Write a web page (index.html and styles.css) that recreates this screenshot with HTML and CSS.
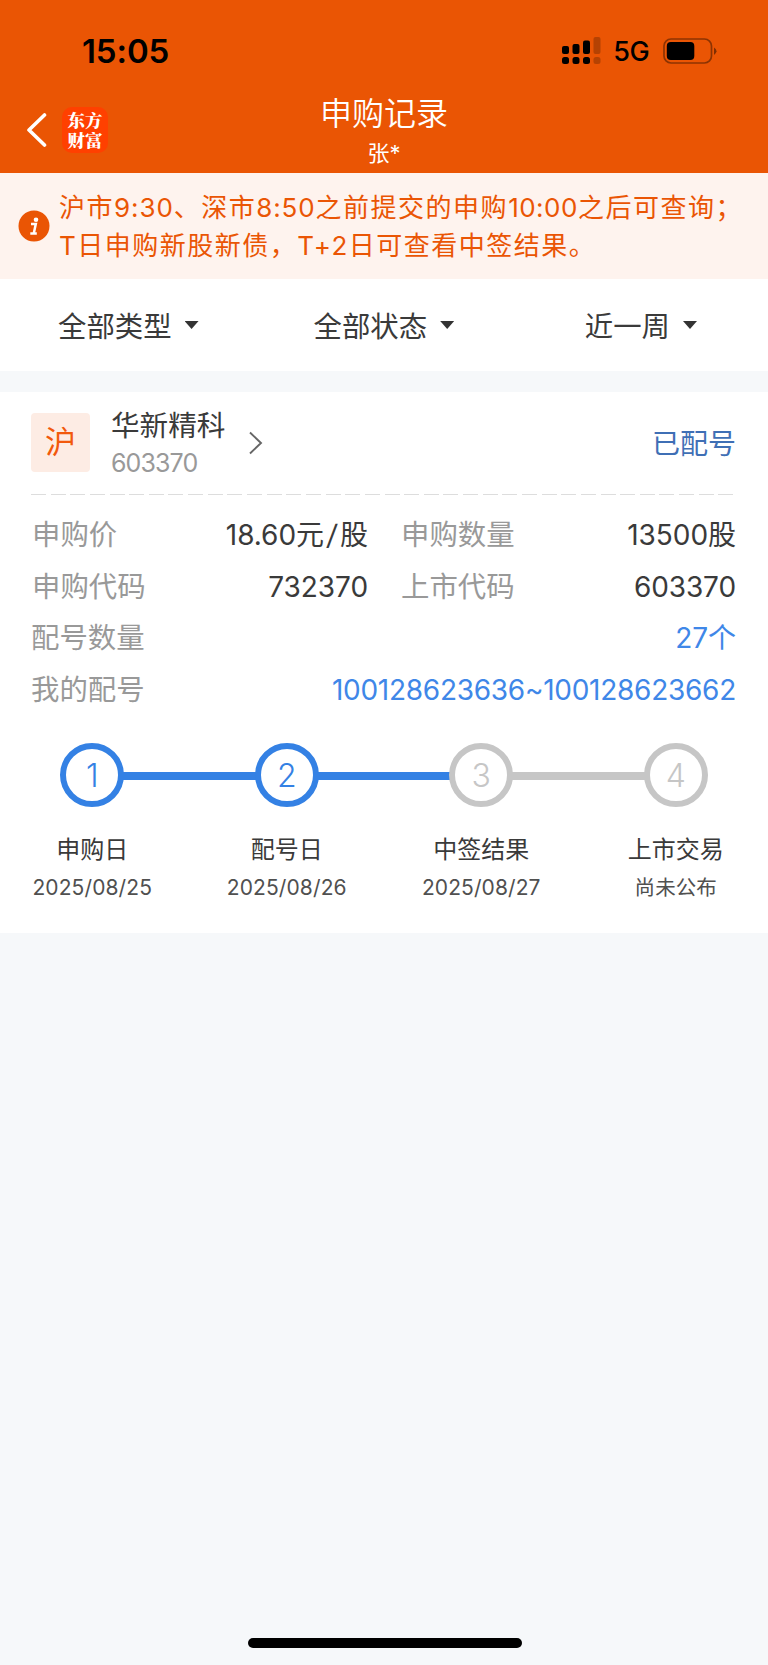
FILE: index.html
```html
<!DOCTYPE html>
<html lang="zh-CN">
<head>
<meta charset="utf-8">
<title>申购记录</title>
<link rel="stylesheet" href="styles.css">
</head>
<body>
<div class="screen">
  <header class="header">
    <div class="status">
      <span class="time">15:05</span>
      <div class="status-icons">
        <svg class="signal" width="40" height="28" viewBox="0 0 40 28">
          <rect x="1" y="9" width="7" height="8" rx="2"/><rect x="11.5" y="7" width="7" height="10" rx="2"/><rect x="22" y="3.500" width="7" height="13.500" rx="2"/>
          <rect x="1" y="20" width="7" height="7" rx="2.500"/><rect x="11.500" y="20" width="7" height="7" rx="2.500"/><rect x="22" y="20" width="7" height="7" rx="2.500"/>
          <g opacity=".22"><rect x="32.500" y="0" width="7" height="17" rx="2"/><rect x="32.500" y="20" width="7" height="7" rx="2.500"/></g>
        </svg>
        <span class="network">5G</span>
        <svg class="battery" width="54" height="26" viewBox="0 0 54 26">
          <rect x="1" y="1" width="47.500" height="24" rx="7" fill="none" stroke="#000" stroke-opacity=".4" stroke-width="1.700"/>
          <rect x="3.800" y="4" width="27.500" height="18" rx="4"/>
          <path d="M51 9.500q5 3.700 0 7.400z" opacity=".45"/>
        </svg>
      </div>
    </div>
    <div class="nav">
      <div class="nav-left">
        <svg width="20" height="34" viewBox="0 0 20 34"><path d="M17.500 2 2 17l15.500 15" fill="none" stroke="#fff" stroke-width="3.600" stroke-linecap="round" stroke-linejoin="round"/></svg>
        <div class="logo">东方<br>财富</div>
      </div>
      <div class="nav-title">
        <h1>申购记录</h1>
        <p>张*</p>
      </div>
    </div>
  </header>

  <div class="notice">
    <svg width="32" height="32" viewBox="0 0 32 32"><circle cx="16" cy="16" r="15.500" fill="#ea5504"/><circle cx="18" cy="9.700" r="2.300" fill="#fff"/><path d="M13 14h4.800l-2 9.300M12.300 23.500h6.500" fill="none" stroke="#fff" stroke-width="2.500"/></svg>
    <div class="notice-text">
      <p>沪市<span class="clock">9:30</span>、深市<span class="clock">8:50</span>之前提交的申购<span class="clock-long">10:00</span>之后可查询；</p>
      <p>T日申购新股新债，T+2日可查看中签结果。</p>
    </div>
  </div>

  <nav class="filters">
    <div class="filter">全部类型<i class="caret"></i></div>
    <div class="filter">全部状态<i class="caret"></i></div>
    <div class="filter last">近一周<i class="caret"></i></div>
  </nav>

  <main class="card">
    <div class="stock">
      <div class="market">沪</div>
      <div class="stock-name"><strong>华新精科</strong><span>603370</span></div>
      <svg class="chevron" width="14" height="24" viewBox="0 0 14 24"><path d="M1 1.500 12 12 1 22.500" fill="none" stroke="#666" stroke-width="1.900"/></svg>
      <div class="state">已配号</div>
    </div>
    <div class="dashes"></div>
    <dl class="details">
      <div class="cell"><dt>申购价</dt><dd>18.60元<span class="slash">/</span>股</dd></div>
      <div class="cell"><dt>申购数量</dt><dd>13500股</dd></div>
      <div class="cell"><dt>申购代码</dt><dd>732370</dd></div>
      <div class="cell"><dt>上市代码</dt><dd class="compact">603370</dd></div>
      <div class="cell wide"><dt>配号数量</dt><dd class="link">27个</dd></div>
      <div class="cell wide"><dt>我的配号</dt><dd class="link range">100128623636~100128623662</dd></div>
    </dl>
    <ol class="steps">
      <li class="step done"><span class="dot">1</span><b>申购日</b><small>2025/08/25</small></li>
      <li class="step done"><span class="dot">2</span><b>配号日</b><small>2025/08/26</small></li>
      <li class="step"><span class="dot">3</span><b>中签结果</b><small>2025/08/27</small></li>
      <li class="step"><span class="dot">4</span><b>上市交易</b><small class="cjk">尚未公布</small></li>
    </ol>
  </main>
  <div class="home-bar"></div>
</div>
</body>
</html>
```

FILE: styles.css
```css
* { box-sizing: border-box; margin: 0; padding: 0; }
body {
  font-family: Inter, "Noto Sans CJK SC", sans-serif;
  background: #f6f8fa;
  color: #3a3a3a;
}
.screen { display: flex; flex-direction: column; width: 768px; height: 1665px; white-space: nowrap; }

.header { height: 173px; background: #ea5504; padding-top: 31px; }
.status { display: flex; justify-content: space-between; align-items: center; height: 40px; padding: 0 51px 0 82px; color: #000; }
.time { font-size: 33px; font-weight: 600; line-height: 40px; letter-spacing: -0.1px; }
.status-icons { display: flex; align-items: center; }
.signal { margin-right: 12px; margin-left: -1px; }
.network { font-size: 27px; font-weight: 500; line-height: 40px; margin-right: 14px; letter-spacing: -0.6px; padding-top: 2px; }
.nav { display: grid; grid-template-columns: 1fr 300px 1fr; height: 102px; }
.nav-left { display: flex; align-items: center; gap: 15px; padding: 16px 0 0 27px; }
.logo { width: 46px; height: 46px; padding-top: 3px; border-radius: 10px; background: #ff4000; color: #fff; font-family: "Noto Serif CJK SC", "Noto Sans CJK SC", serif; font-size: 17.500px; font-weight: 900; line-height: 19.500px; text-align: center; }
.nav-title { display: flex; flex-direction: column; align-items: center; color: #fff; padding-top: 23px; }
.nav-title h1 { font-size: 32px; font-weight: 350; line-height: 40px; }
.nav-title p { font-size: 22px; line-height: 39px; }

.notice { display: flex; height: 106px; background: #fef3ee; padding: 16px 0 0 18px; color: #ea5504; }
.notice > svg { margin-top: 21px; }
.notice-text { padding-left: 9px; font-size: 26px; line-height: 38px; letter-spacing: 1.5px; }
.clock { letter-spacing: 0.9px; }
.clock-long { letter-spacing: 0.5px; }

.filters { display: flex; align-items: center; height: 92px; background: #fff; padding: 0 71px 2px 58px; font-size: 28.400px; }
.filter { display: flex; align-items: center; gap: 13px; margin-right: 115px; }
.filter.last { margin: 0 0 0 auto; }
.caret { width: 14px; height: 8px; margin-top: 2px; background: #333; clip-path: polygon(0 0, 100% 0, 50% 100%); }

.card { height: 541px; margin-top: 21px; padding: 20px 32px 0 31px; background: #fff; }
.stock { display: flex; align-items: center; height: 60px; }
.market { width: 59px; height: 59px; border-radius: 4px; background: #fdece4; color: #f2590c; font-size: 31px; line-height: 58px; text-align: center; }
.stock-name { display: flex; flex-direction: column; width: 118px; margin: 4px 0 0 21px; }
.stock-name strong { font-size: 28.600px; font-weight: 400; line-height: 38px; }
.stock-name span { font-size: 25px; line-height: 36px; color: #999; letter-spacing: -0.9px; }
.chevron { margin: 1px 0 0 20px; }
.state { margin-left: auto; font-size: 28px; color: #3f6fb5; }
.dashes { height: 1px; margin: 22px 1px 14px 0; background: repeating-linear-gradient(90deg, #ddd 0 15px, transparent 15px 19.640px); }
.details { display: grid; grid-template-columns: 337px 335px; column-gap: 33px; grid-auto-rows: 51.700px; font-size: 28px; }
.cell { display: flex; justify-content: space-between; line-height: 52px; }
.cell:not(.wide):nth-child(odd) dt { padding-left: 1px; }
.wide { grid-column: 1 / 3; }
dt { color: #999; font-size: 28.400px; }
dd { letter-spacing: -0.050px; }
.compact { letter-spacing: -0.100px; }
.slash { display: inline-block; margin: 0 3px; transform: skewX(-6deg); }
.link { color: #3f87e8; }
.range { letter-spacing: -0.270px; }

.steps { display: flex; list-style: none; margin: 27px -37px 0 -36px; }
.step { position: relative; flex: 1; display: flex; flex-direction: column; align-items: center; }
.dot { display: block; width: 64px; height: 64px; border: 6.500px solid #c6c6c6; border-radius: 50%; background: #fff; color: #c6c6c6; font-size: 32px; font-weight: 300; line-height: 53px; text-align: center; }
.done .dot { border-color: #3481e4; color: #3481e4; }
.step:not(:last-child)::after { content: ""; position: absolute; left: calc(50% + 31px); right: calc(-50% + 31px); top: 29px; height: 8px; background: #c6c6c6; }
.step.done::after { background: #3481e4; }
.step b { font-size: 24px; font-weight: 400; line-height: 36px; margin-top: 25px; }
.step small { font-size: 21px; line-height: 36px; margin-top: 2px; color: #505050; letter-spacing: 0.1px; }
.step .cjk { font-size: 20.500px; }

.home-bar { width: 274px; height: 10px; margin: auto 0 17px 248px; border-radius: 5px; background: #000; }
```
